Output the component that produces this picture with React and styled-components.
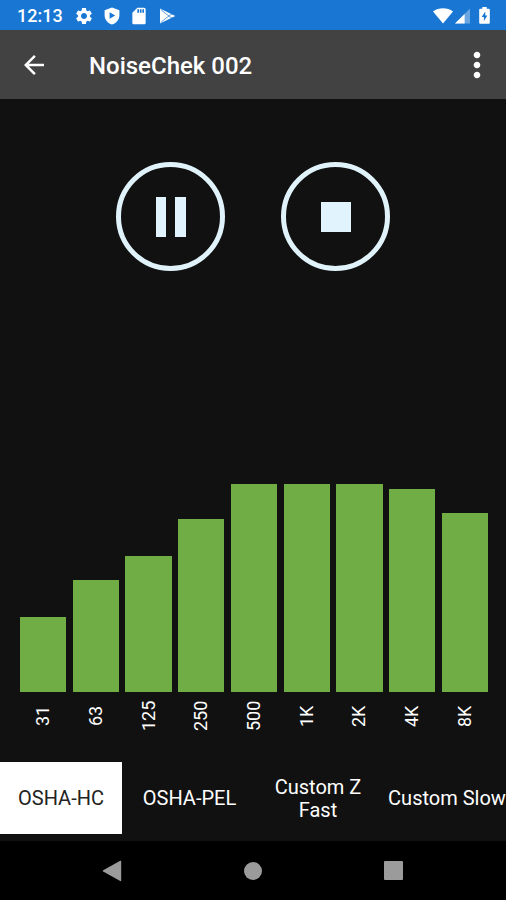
import React, { useState } from 'react';
import styled, { createGlobalStyle } from 'styled-components';
import { MdArrowBack, MdMoreVert, MdSdCard, MdSettings } from 'react-icons/md';

const bands = [
  { label: '31', level: 75 },
  { label: '63', level: 112 },
  { label: '125', level: 136.5 },
  { label: '250', level: 173.5 },
  { label: '500', level: 208 },
  { label: '1K', level: 208 },
  { label: '2K', level: 208 },
  { label: '4K', level: 203.5 },
  { label: '8K', level: 179 },
];

const profiles = [
  { name: 'OSHA-HC', width: 122 },
  { name: 'OSHA-PEL', width: 135 },
  { name: 'Custom Z Fast', width: 122 },
  { name: 'Custom Slow', width: 136 },
];

const App = () => {
  const [active, setActive] = useState(0);

  return (
    <Screen>
      <GlobalStyle />
      <StatusBar>
        <Clock>12:13</Clock>
        <Notifications>
          <MdSettings size={20} />
          <svg width="16" height="18" viewBox="0 0 16 18">
            <path
              fill="currentColor"
              fillRule="evenodd"
              d="M8 0.4 15.4 3.3V8.2C15.4 12.6 12.3 16.3 8 17.4 3.7 16.3 0.6 12.6 0.6 8.2V3.3ZM5.6 5.2V11.8L11.2 8.5Z"
            />
          </svg>
          <MdSdCard size={20} />
          <svg width="17" height="16" viewBox="0 0 17 16">
            <path
              fill="currentColor"
              d="M1 .6 16.3 8 1 15.4Z"
            />
            <path
              d="M1.6 1.4 9.7 8 1.6 14.6M9.2 8 13 6M9.2 8 13 10"
              fill="none"
              stroke="#1976d2"
              strokeWidth="0.9"
              opacity="0.75"
            />
          </svg>
        </Notifications>
        <SystemIcons>
          <svg width="20" height="16" viewBox="0 0 20 16">
            <path
              fill="currentColor"
              d="M10 15.6 0 3.4C5.6-.9 14.4-.9 20 3.4Z"
            />
          </svg>
          <svg width="15" height="16" viewBox="0 0 15 16">
            <path fill="currentColor" opacity="0.35" d="M0 15.5 15 .5V15.5Z" />
            <path fill="currentColor" d="M0 15.5 9.6 5.9V15.5Z" />
          </svg>
          <svg width="11" height="17" viewBox="0 0 11 17">
            <path
              fill="currentColor"
              fillRule="evenodd"
              d="M3.3 0h4.4v1.8h2.1q1 0 1 1V15.8q0 1-1 1H1.2q-1 0-1-1V2.8q0-1 1-1h2.1ZM6.3 4.6 2.6 10H4.9V14L8.4 8.6H6.3Z"
            />
          </svg>
        </SystemIcons>
      </StatusBar>

      <Toolbar>
        <IconButton aria-label="Back">
          <MdArrowBack size={30} />
        </IconButton>
        <Title>NoiseChek 002</Title>
        <IconButton aria-label="More options">
          <MdMoreVert size={40} />
        </IconButton>
      </Toolbar>

      <Content>
        <Controls>
          <RoundButton aria-label="Pause">
            <PauseBar />
            <PauseBar />
          </RoundButton>
          <RoundButton aria-label="Stop">
            <StopSquare />
          </RoundButton>
        </Controls>

        <Chart>
          {bands.map(({ label, level }) => (
            <Band key={label}>
              <Bar style={{ height: level }} />
              <BandLabel>{label}</BandLabel>
            </Band>
          ))}
        </Chart>

        <Tabs>
          {profiles.map(({ name, width }, index) => (
            <Tab
              key={name}
              $width={width}
              $active={active === index}
              onClick={() => setActive(index)}
            >
              {name}
            </Tab>
          ))}
        </Tabs>
      </Content>

      <NavBar>
        <svg width="20" height="22" viewBox="0 0 20 22">
          <path
            fill="currentColor"
            d="M18.2.8Q19.2.3 19.2 1.4V20.4Q19.2 21.5 18.2 21L1.2 11.6Q.2 10.9 1.2 10.2Z"
          />
        </svg>
        <HomeDot />
        <RecentSquare />
      </NavBar>
    </Screen>
  );
};

const GlobalStyle = createGlobalStyle`
  * {
    box-sizing: border-box;
  }

  body {
    margin: 0;
    background: #000;
    font-family: Roboto, 'Liberation Sans', sans-serif;
  }

  button {
    border: 0;
    padding: 0;
    background: none;
    color: inherit;
    font: inherit;
  }

  svg {
    display: block;
    flex: none;
  }
`;

const Screen = styled.div`
  display: flex;
  flex-direction: column;
  width: 506px;
  height: 900px;
  overflow: hidden;
  background: #111;
  color: #fff;
`;

const StatusBar = styled.header`
  display: flex;
  align-items: center;
  height: 30px;
  padding: 1px 16px 0 17px;
  background: #1976d2;
`;

const Clock = styled.span`
  width: 57px;
  font-size: 18px;
  font-weight: 500;
  line-height: 30px;
`;

const Notifications = styled.div`
  display: flex;
  align-items: center;
  gap: 9.5px;
`;

const SystemIcons = styled.div`
  display: flex;
  align-items: center;
  margin-left: auto;

  svg + svg {
    margin-left: 2px;
  }

  svg:last-child {
    margin-left: 9px;
  }
`;

const Toolbar = styled.div`
  display: flex;
  align-items: center;
  height: 69px;
  padding: 0 9px 0 19px;
  background: #424242;
`;

const IconButton = styled.button`
  display: flex;
`;

const Title = styled.h1`
  flex: 1;
  margin: 2px 0 0 40px;
  font-size: 24px;
  font-weight: 500;
  line-height: 30px;
`;

const Content = styled.main`
  display: flex;
  flex: 1;
  flex-direction: column;
  min-height: 0;
`;

const Controls = styled.div`
  display: flex;
  justify-content: center;
  gap: 56px;
  padding-top: 63px;
`;

const RoundButton = styled.button`
  display: flex;
  justify-content: center;
  align-items: center;
  gap: 9px;
  width: 109px;
  height: 109px;
  border: 5px solid #e1f3fa;
  border-radius: 50%;
`;

const PauseBar = styled.span`
  width: 10.5px;
  height: 40px;
  background: #e1f3fd;
`;

const StopSquare = styled.span`
  width: 30px;
  height: 30px;
  background: #e1f3fd;
`;

const Chart = styled.div`
  display: grid;
  grid-template-columns: repeat(9, 1fr);
  align-items: end;
  gap: 6.7px;
  margin-top: auto;
  padding: 0 18px 0 20px;
`;

const Band = styled.div`
  display: flex;
  flex-direction: column;
  align-items: center;
`;

const Bar = styled.div`
  width: 100%;
  background: #71ad45;
`;

const BandLabel = styled.span`
  display: flex;
  justify-content: center;
  height: 46px;
  margin-top: 0.5px;
  writing-mode: vertical-rl;
  transform: rotate(180deg);
  font-size: 18px;
  line-height: 22px;
  text-align: center;
`;

const Tabs = styled.nav`
  display: flex;
  height: 72.5px;
  margin: 23px 0 7px;
  overflow: hidden;
`;

const Tab = styled.button`
  flex: none;
  width: ${(props) => props.$width}px;
  padding: 0 16px;
  padding: 2px ${(props) => (props.$width > 125 ? 4 : 16)}px 0;
  background: ${(props) => (props.$active ? '#fff' : 'transparent')};
  color: ${(props) => (props.$active ? '#222' : '#fff')};
  font-size: 20px;
  line-height: 23px;
`;

const NavBar = styled.footer`
  display: flex;
  align-items: center;
  height: 59px;
  padding: 0 103px 0 102px;
  justify-content: space-between;
  background: #000;
  color: #9b9b9b;
`;

const HomeDot = styled.span`
  width: 18px;
  height: 18px;
  border-radius: 50%;
  background: currentColor;
`;

const RecentSquare = styled.span`
  width: 19px;
  height: 19px;
  border-radius: 1px;
  background: currentColor;
`;

export default App;
